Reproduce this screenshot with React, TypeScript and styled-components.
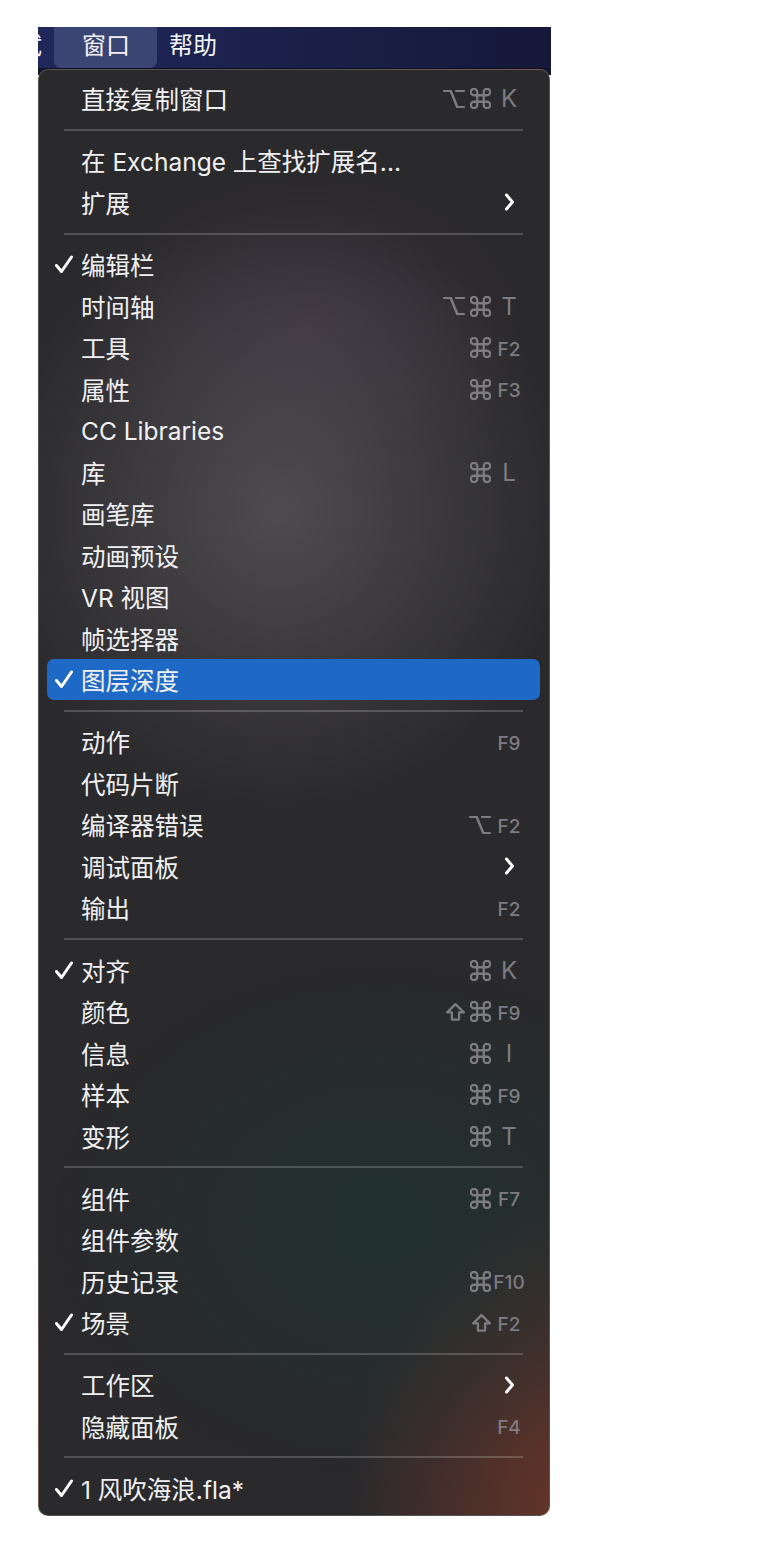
import React from 'react';
import styled, { createGlobalStyle } from 'styled-components';

const GlobalStyle = createGlobalStyle`
  html, body { margin: 0; padding: 0; background: #ffffff; }
  body { font-family: "Inter", "Noto Sans CJK SC", sans-serif; }
`;

type Mod = 'opt' | 'cmd' | 'shift';
type Item = {
  label: string;
  mods?: Mod[];
  keyName?: string;
  checked?: boolean;
  active?: boolean;
  submenu?: boolean;
};
type Entry = Item | 'sep';

const entries: Entry[] = [
  { label: '直接复制窗口', mods: ['opt', 'cmd'], keyName: 'K' },
  'sep',
  { label: '在 Exchange 上查找扩展名...' },
  { label: '扩展', submenu: true },
  'sep',
  { label: '编辑栏', checked: true },
  { label: '时间轴', mods: ['opt', 'cmd'], keyName: 'T' },
  { label: '工具', mods: ['cmd'], keyName: 'F2' },
  { label: '属性', mods: ['cmd'], keyName: 'F3' },
  { label: 'CC Libraries' },
  { label: '库', mods: ['cmd'], keyName: 'L' },
  { label: '画笔库' },
  { label: '动画预设' },
  { label: 'VR 视图' },
  { label: '帧选择器' },
  { label: '图层深度', checked: true, active: true },
  'sep',
  { label: '动作', keyName: 'F9' },
  { label: '代码片断' },
  { label: '编译器错误', mods: ['opt'], keyName: 'F2' },
  { label: '调试面板', submenu: true },
  { label: '输出', keyName: 'F2' },
  'sep',
  { label: '对齐', checked: true, mods: ['cmd'], keyName: 'K' },
  { label: '颜色', mods: ['shift', 'cmd'], keyName: 'F9' },
  { label: '信息', mods: ['cmd'], keyName: 'I' },
  { label: '样本', mods: ['cmd'], keyName: 'F9' },
  { label: '变形', mods: ['cmd'], keyName: 'T' },
  'sep',
  { label: '组件', mods: ['cmd'], keyName: 'F7' },
  { label: '组件参数' },
  { label: '历史记录', mods: ['cmd'], keyName: 'F10' },
  { label: '场景', checked: true, mods: ['shift'], keyName: 'F2' },
  'sep',
  { label: '工作区', submenu: true },
  { label: '隐藏面板', keyName: 'F4' },
  'sep',
  { label: '1 风吹海浪.fla*', checked: true },
];

const Screen = styled.div`
  margin: 27px 0 0 38px;
  width: 513px;
  background: linear-gradient(to bottom, #15172e 0, #15172e 48px, transparent 48px);
`;

const MenuBar = styled.div`
  height: 41px;
  display: flex;
  align-items: stretch;
  overflow: hidden;
  background: linear-gradient(90deg, #20275a 0%, #1b2049 50%, #15183a 100%);
  border-bottom: 1px solid #0e0f1e;
`;

const BarItem = styled.div<{ $active?: boolean; $clipped?: boolean }>`
  display: flex;
  align-items: center;
  box-sizing: border-box;
  padding: ${(p) => (p.$active ? '0 27px 7px 28px' : '0 12px 7px')};
  margin-left: ${(p) => (p.$clipped ? '-56px' : '0')};
  font-family: "Noto Sans CJK SC", sans-serif;
  font-size: 24px;
  line-height: 1;
  color: #f4f4f6;
  white-space: nowrap;
  border-radius: 0 0 7px 7px;
  background: ${(p) => (p.$active ? '#3a4574' : 'transparent')};
`;

const Panel = styled.div`
  width: 512px;
  box-sizing: border-box;
  padding: 8px 0 6px;
  border: 1px solid rgba(255, 255, 255, 0.2);
  border-radius: 10px;
  background:
    radial-gradient(ellipse 290px 300px at 240px 440px, rgba(92, 89, 93, 0.72), rgba(92, 89, 93, 0) 100%),
    radial-gradient(ellipse 220px 160px at 270px 260px, rgba(78, 60, 82, 0.45), rgba(78, 60, 82, 0) 100%),
    radial-gradient(ellipse 330px 260px at 340px 1150px, rgba(30, 52, 50, 0.7), rgba(30, 52, 50, 0) 100%),
    radial-gradient(ellipse 230px 330px at 540px 1450px, rgba(115, 55, 40, 0.88), rgba(115, 55, 40, 0) 100%),
    #2a292c;
`;

const Row = styled.div<{ $active?: boolean }>`
  height: 41.5px;
  margin: 0 9px 0 8px;
  display: flex;
  align-items: center;
  border-radius: 7px;
  background: ${(p) => (p.$active ? '#1f69c6' : 'transparent')};
`;

const CheckCell = styled.div`
  width: 34px;
  box-sizing: border-box;
  padding-left: 7px;
  display: flex;
  align-items: center;
`;

const Label = styled.div`
  flex: 1;
  font-family: "Inter", "Noto Sans CJK SC", sans-serif;
  font-size: 24.5px;
  color: #f1f1f3;
  white-space: nowrap;
`;

const Shortcut = styled.div`
  display: flex;
  align-items: center;
  padding-right: 15px;
  color: #7d7c80;
`;

const Mods = styled.div`
  display: flex;
  align-items: center;
  gap: 5px;
  margin-right: 2px;
`;

const ModIcon = styled.svg`
  display: block;
  flex: none;
`;

const KeyCell = styled.div<{ $fkey?: boolean }>`
  width: 32px;
  display: flex;
  justify-content: center;
  align-items: center;
  font-family: "Inter", sans-serif;
  font-size: ${(p) => (p.$fkey ? '19px' : '24px')};
  font-weight: ${(p) => (p.$fkey ? 500 : 400)};
  padding-top: ${(p) => (p.$fkey ? '3px' : '0')};
`;

const Separator = styled.div`
  height: 20.7px;
  display: flex;
  align-items: center;
  padding: 0 26px 0 25px;
  &::after {
    content: '';
    flex: 1;
    height: 2px;
    background: rgba(255, 255, 255, 0.19);
  }
`;

const modStroke = '#7d7c80';

const CmdIcon = () => (
  <ModIcon width="21" height="21" viewBox="2.3 2.3 19.4 19.4" fill="none">
    <path
      d="M15 6v12a3 3 0 1 0 3-3H6a3 3 0 1 0 3 3V6a3 3 0 1 0-3 3h12a3 3 0 1 0-3-3"
      stroke={modStroke}
      strokeWidth="2.1"
      strokeLinecap="round"
      strokeLinejoin="round"
    />
  </ModIcon>
);

const OptIcon = () => (
  <ModIcon width="22" height="18" viewBox="2 2 20 20" preserveAspectRatio="none" fill="none">
    <path d="M3 3h6l6 18h6" stroke={modStroke} strokeWidth="2.3" strokeLinecap="round" strokeLinejoin="round" />
    <path d="M14 3h7" stroke={modStroke} strokeWidth="2.3" strokeLinecap="round" />
  </ModIcon>
);

const ShiftIcon = () => (
  <ModIcon width="19" height="19" viewBox="4 4 16 15.5" fill="none">
    <path d="M9 18.5v-6H5l7-7 7 7h-4v6H9z" stroke={modStroke} strokeWidth="1.9" strokeLinejoin="round" />
  </ModIcon>
);

const modIcons: Record<Mod, () => React.ReactElement> = {
  opt: OptIcon,
  cmd: CmdIcon,
  shift: ShiftIcon,
};

const CheckIcon = () => (
  <svg width="20" height="19" viewBox="0 0 20 19" fill="none">
    <path d="M2.5 10.5 L7.5 16.5 L17.5 2" stroke="#ffffff" strokeWidth="3" strokeLinecap="round" strokeLinejoin="round" />
  </svg>
);

const ChevronIcon = () => (
  <svg width="12" height="18" viewBox="0 0 12 18" fill="none">
    <path d="M3.5 2 L9.5 9 L3.5 16" stroke="#ffffff" strokeWidth="3" strokeLinecap="round" strokeLinejoin="round" />
  </svg>
);

const MenuRow = ({ item }: { item: Item }) => {
  const fkey = !!item.keyName && /^F\d+$/.test(item.keyName);
  return (
    <Row $active={item.active}>
      <CheckCell>{item.checked && <CheckIcon />}</CheckCell>
      <Label>{item.label}</Label>
      {(item.keyName || item.submenu) && (
        <Shortcut>
          {item.mods && (
            <Mods>
              {item.mods.map((m, i) => {
                const Icon = modIcons[m];
                return <Icon key={i} />;
              })}
            </Mods>
          )}
          <KeyCell $fkey={fkey}>{item.submenu ? <ChevronIcon /> : item.keyName}</KeyCell>
        </Shortcut>
      )}
    </Row>
  );
};

export default function App() {
  return (
    <>
      <GlobalStyle />
      <Screen>
        <MenuBar>
          <BarItem $clipped>调试</BarItem>
          <BarItem $active>窗口</BarItem>
          <BarItem>帮助</BarItem>
        </MenuBar>
        <Panel>
          {entries.map((e, i) =>
            e === 'sep' ? <Separator key={i} /> : <MenuRow key={i} item={e} />
          )}
        </Panel>
      </Screen>
    </>
  );
}
